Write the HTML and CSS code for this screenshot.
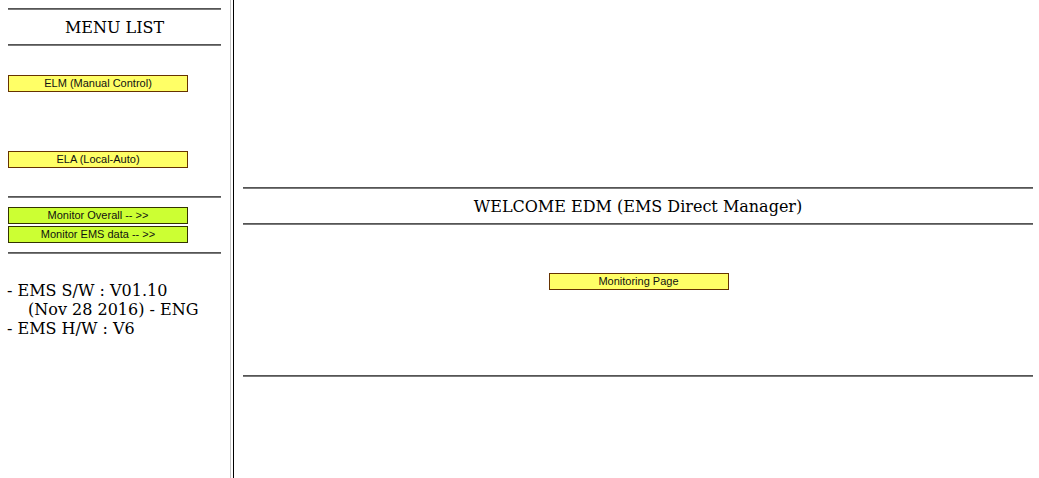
FILE: index.html
```html
<!DOCTYPE html>
<html>
<head>
<meta charset="utf-8">
<title>EDM</title>
<link rel="stylesheet" href="styles.css">
</head>
<body>
<div class="frames">
  <div class="menu">
    <hr class="rule">
    <div class="title">MENU LIST</div>
    <hr class="rule">
    <div class="btn yellow gap-elm">ELM (Manual Control)</div>
    <div class="btn yellow gap-ela">ELA (Local-Auto)</div>
    <hr class="rule gap-rule">
    <div class="btn green gap-mon1">Monitor Overall -- &gt;&gt;</div>
    <div class="btn green gap-mon2">Monitor EMS data -- &gt;&gt;</div>
    <hr class="rule gap-rule2">
    <div class="info">
      <div>- EMS S/W : V01.10</div>
      <div class="indent">(Nov 28 2016) - ENG</div>
      <div>- EMS H/W : V6</div>
    </div>
  </div>
  <div class="divider"></div>
  <div class="main">
    <hr class="rule">
    <div class="title">WELCOME EDM (EMS Direct Manager)</div>
    <hr class="rule">
    <div class="center">
      <div class="btn yellow">Monitoring Page</div>
    </div>
    <hr class="rule gap-bottom">
  </div>
</div>
</body>
</html>
```

FILE: styles.css
```css
html, body {
  margin: 0;
  padding: 0;
  background: #ffffff;
  height: 100%;
}

body {
  font-family: "DejaVu Serif", serif;
  font-size: 16px;
  color: #000000;
}

.frames {
  display: flex;
  height: 478px;
}

.menu {
  width: 213px;
  flex: none;
  padding: 8px 8px 0 8px;
  display: flex;
  flex-direction: column;
}

.divider {
  flex: none;
  width: 2px;
  margin-left: 1px;
  border-left: 1px solid #c4c4c4;
  border-right: 1px solid #000000;
}

.main {
  flex: 1;
  padding: 187px 6px 0 9px;
  display: flex;
  flex-direction: column;
}

.rule {
  margin: 0;
  height: 0;
  border: 0;
  border-top: 1px solid #555555;
  border-bottom: 1px solid #7a7a7a;
}

.title {
  text-align: center;
  line-height: 19px;
  padding: 8px 0 7px 0;
}

.btn {
  box-sizing: border-box;
  width: 180px;
  height: 17px;
  font-family: "Liberation Sans", Arial, sans-serif;
  font-size: 11px;
  line-height: 15px;
  text-align: center;
  color: #111111;
}

.yellow {
  background: #ffff66;
  border: 1px solid #663300;
}

.green {
  background: #ccff33;
  border: 1px solid #333300;
}

.gap-elm { margin-top: 29px; }
.gap-ela { margin-top: 59px; }
.gap-rule { margin-top: 28px; }
.gap-mon1 { margin-top: 9px; }
.gap-mon2 { margin-top: 2px; }
.gap-rule2 { margin-top: 9px; }

.info {
  margin-top: 27px;
  margin-left: -1px;
  line-height: 19px;
}

.indent {
  padding-left: 21px;
}

.center {
  display: flex;
  justify-content: center;
  padding: 48px 0 0 1px;
}

.gap-bottom { margin-top: 85px; }
```
